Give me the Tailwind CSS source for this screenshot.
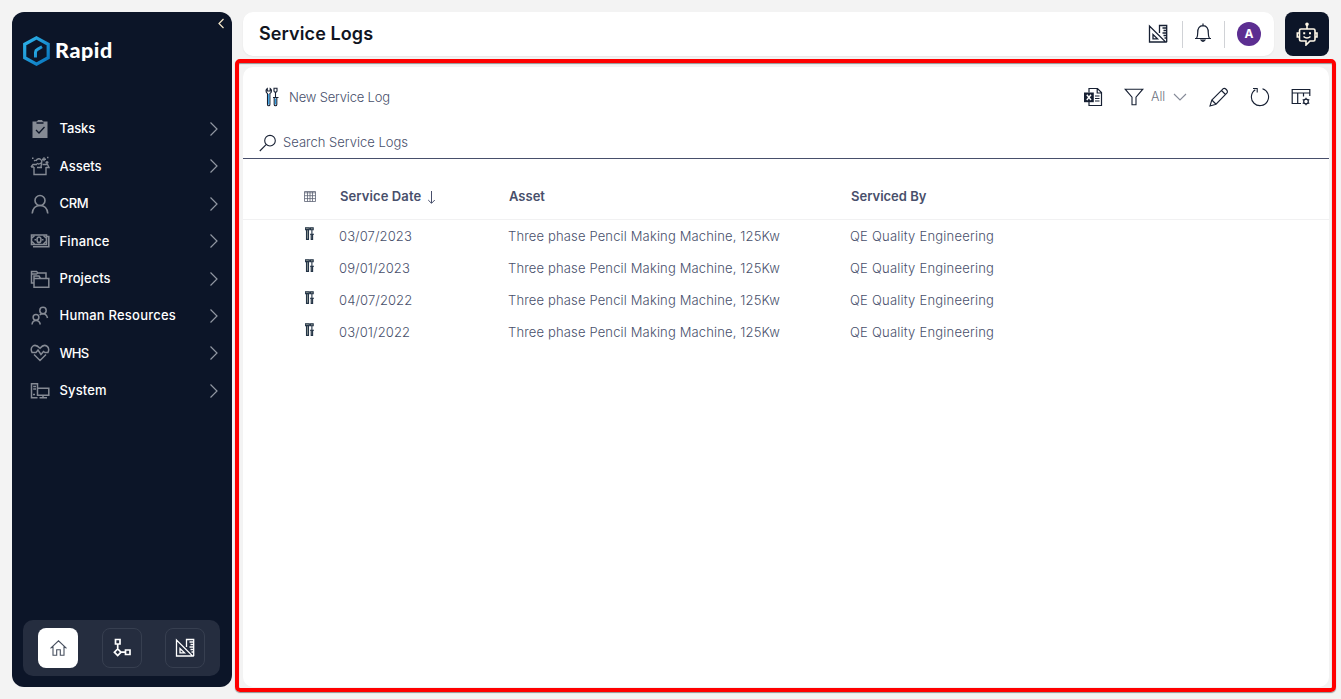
<!DOCTYPE html>
<html lang="en">
<head>
<meta charset="utf-8">
<title>Service Logs</title>
<script src="https://cdn.jsdelivr.net/npm/@tailwindcss/browser@4"></script>
</head>
<body class="relative flex h-[699px] w-[1341px] gap-[11px] overflow-hidden bg-[#f3f3f3] p-3 font-[Inter,sans-serif] text-[13px] text-[#484f6b]">
<svg class="absolute size-0">
  <defs>
    <linearGradient id="blue" x1="0" y1="0" x2="1" y2="1"><stop offset="0" stop-color="#2fb5ea"/><stop offset="1" stop-color="#0873bd"/></linearGradient>
    <symbol id="chev" viewBox="0 0 10 16"><path d="M1.5 1.5 8 8l-6.5 6.500" fill="none" stroke="currentColor" stroke-width="1.200"/></symbol>
    <symbol id="design" viewBox="0 0 20 20"><path d="M1.500 2v16h16.200zM5 10.500V14.800h4.500zM11.500 9V1.500h7.200V18M18.500 4h-4M18.500 6.500h-3M18.500 9h-4M18.500 11.500h-3M18.500 14h-2" fill="none" stroke="currentColor" stroke-width="1.300"/></symbol>
    <symbol id="tools" viewBox="0 0 14 20"><g fill="none" stroke="currentColor" stroke-width="1.100"><path d="M2.500 6.500v11q0 1.300 1.200 1.300t1.200-1.300v-11q1.600-.8 1.600-2.800 0-1.500-1.300-2.300V4H2.300V1.400Q1 2.200 1 3.700 1 5.700 2.500 6.500z"/><path d="M9 1.200h3v2.800l-.6 1H9.600L9 4zM10.500 5v5M8 10.500h5.500M9.200 10.500v7q0 1.300 1.300 1.300t1.300-1.300v-7"/></g><path d="M3.700 7v10.500M10.500 11.500v6" stroke="#2f9be0" stroke-width="1.200"/></symbol>
    <symbol id="tools-sm" viewBox="0 0 9 13"><path d="M.3.700h4v2h-4zM1.500 2.500V12.400h2V2.500zM5.500.7h2.700v2H5.500zM6.900 2.500v4.500M5 7.300h4M6.200 7.500v4.900h1.400V7.500" fill="#8a948f" stroke="currentColor" stroke-width="1.100"/></symbol>
  </defs>
</svg>

<aside class="flex h-[675px] w-[220px] shrink-0 flex-col rounded-xl bg-[#0c1528] text-white">
  <div class="flex h-[98px] justify-between pl-[10px] pr-[7px]">
    <div class="flex items-center gap-[2px] pb-[20px]">
      <svg class="h-[32px] w-[30px]" viewBox="0 0 30 32"><path d="M14.500 2.800 26.200 9.300v13.400L14.500 29.200 2.700 22.700V9.300z" fill="none" stroke="url(#blue)" stroke-width="3.200"/><path d="M13.500 22.500V17.500q0-2.200 2-3.200L20 11.800" fill="none" stroke="url(#blue)" stroke-width="3"/></svg>
      <span class="-mt-px ml-px font-[Lato,sans-serif] text-[21.500px] font-black tracking-[0.600px]">Rapid</span>
    </div>
    <svg class="mt-[6px] h-[11px] w-[8px] text-[#f4e7c9]" viewBox="0 0 8 11"><path d="M6.500 1 2 5.500 6.500 10" fill="none" stroke="currentColor" stroke-width="1.200"/></svg>
  </div>
  <nav class="flex flex-col pt-[0.400px] font-medium">
    <a class="flex h-[37.4px] items-center pl-[18px] pr-[13px]"><svg class="size-5 text-[#858a94]" viewBox="0 0 20 20"><path d="M3 2.500h4L8 1h4l1 1.500h4.500V19H2.500V2.500z" fill="currentColor"/><path d="M6.500 4h7M6 11l3 3 5.500-6" fill="none" stroke="#0c1528" stroke-width="1.300"/></svg><span class="ml-[9.500px] grow tracking-[-0.100px]">Tasks</span><svg class="h-4 w-[10px] text-[#9197a2]"><use href="#chev"/></svg></a>
    <a class="flex h-[37.4px] items-center pl-[18px] pr-[13px]"><svg class="size-5 text-[#858a94]" viewBox="0 0 20 20" fill="none" stroke="currentColor" stroke-width="1.400"><path d="M4 11v7.500h12V11M1 11l2-2.500h4M12.500 8.500h5l1.500 3h-3M1 11h3M7 11.500h5M6 5q1-3 4-2 3 2 1 4-3 2-4 0M12 4l-1 7M14 1.200v4M12 3.200h4M17 5v3M15.500 6.500h3M2 2.300h1.500M4 5l1.500-1M17 1.500h1.500"/></svg><span class="ml-[9.500px] grow">Assets</span><svg class="h-4 w-[10px] text-[#9197a2]"><use href="#chev"/></svg></a>
    <a class="flex h-[37.4px] items-center pl-[18px] pr-[13px]"><svg class="size-5 text-[#858a94]" viewBox="0 0 20 20" fill="none" stroke="currentColor" stroke-width="1.600"><circle cx="10" cy="6.500" r="5"/><path d="M2.200 19.500Q3 11.500 10 11.500t7.800 8"/></svg><span class="ml-[9.500px] grow tracking-[-0.300px]">CRM</span><svg class="h-4 w-[10px] text-[#9197a2]"><use href="#chev"/></svg></a>
    <a class="flex h-[37.4px] items-center pl-[18px] pr-[13px]"><svg class="size-5 text-[#858a94]" viewBox="0 0 20 20" fill="none" stroke="currentColor" stroke-width="1.600"><path d="M1.500 4h15v9.500h-15zM3 15.800h15.800V5.500H17"/><path d="M2 7l2.500-2.500M13.500 4.500L16 7M2 10.500l2.500 2.500M13.500 13L16 10.500"/><ellipse cx="9" cy="8.800" rx="2" ry="2.800"/><path d="M4.500 8.800H6M12 8.800h1.500"/></svg><span class="ml-[9.500px] grow tracking-[0.150px]">Finance</span><svg class="h-4 w-[10px] text-[#9197a2]"><use href="#chev"/></svg></a>
    <a class="flex h-[37.4px] items-center pl-[18px] pr-[13px]"><svg class="size-5 text-[#858a94]" viewBox="0 0 20 20" fill="none" stroke="currentColor" stroke-width="1.500"><path d="M4 18.300V9.500h14.800v8.800zM4 9.500V7h5l1.500 2.500M3.500 14H1.500V2.500h5L8 4h8v5M1.500 5h5L8 4"/></svg><span class="ml-[9.500px] grow tracking-[0.050px]">Projects</span><svg class="h-4 w-[10px] text-[#9197a2]"><use href="#chev"/></svg></a>
    <a class="flex h-[37.4px] items-center pl-[18px] pr-[13px]"><svg class="size-5 text-[#858a94]" viewBox="0 0 20 20" fill="none" stroke="currentColor" stroke-width="1.500"><circle cx="13" cy="4.500" r="3.200"/><circle cx="6" cy="11.300" r="2.900"/><path d="M2 18.500q.5-4 4-4t4.300 4M9.700 9q1-1.300 3.300-1.300 3.500 0 4.500 4.300"/></svg><span class="ml-[9.500px] grow tracking-[0.220px]">Human Resources</span><svg class="h-4 w-[10px] text-[#9197a2]"><use href="#chev"/></svg></a>
    <a class="flex h-[37.4px] items-center pl-[18px] pr-[13px]"><svg class="size-5 text-[#858a94]" viewBox="0 0 20 20" fill="none" stroke="currentColor" stroke-width="1.500"><path d="M2 9.500Q0 5 3 3t7 2.300Q13.500 1 16.700 3T18 9.500M4 11.500l6 6 6-6M1.500 9.500H6l2-2.500 3 4.500 2.500-3L15 9.500h3.500"/></svg><span class="ml-[9.500px] grow tracking-[-0.700px]">WHS</span><svg class="h-4 w-[10px] text-[#9197a2]"><use href="#chev"/></svg></a>
    <a class="flex h-[37.4px] items-center pl-[18px] pr-[13px]"><svg class="size-5 text-[#858a94]" viewBox="0 0 20 20" fill="none" stroke="currentColor" stroke-width="1.500"><path d="M7.500 7V2.700h-6v14h6M3.200 5.500H6M3.200 8H6M3 13.500h2M7.500 7.300h11.300v7H7.500zM13 14.500v2M9.500 16.700H17"/></svg><span class="ml-[9.500px] grow tracking-[0.150px]">System</span><svg class="h-4 w-[10px] text-[#9197a2]"><use href="#chev"/></svg></a>
  </nav>
  <div class="ml-[11px] mr-3 mb-[11px] mt-auto flex h-14 items-center rounded-[10px] bg-[#252d3f] pl-[15px]">
    <div class="flex size-10 shrink-0 items-center justify-center rounded-lg bg-white text-[#48505f]"><svg class="size-[18px]" viewBox="0 0 18 18" fill="none" stroke="currentColor" stroke-width="1.100"><path d="M1.500 9.300 9.500 1.800l8 7.500M4 7.500v8.700h3.700v-5.500h3.600v5.500H15V7.500"/></svg></div>
    <div class="ml-6 flex size-10 shrink-0 items-center justify-center rounded-lg border border-[#373f50]"><svg class="size-5" viewBox="0 0 20 20" fill="none" stroke="currentColor" stroke-width="1.700"><path d="M3.500 1.500H8V6H3.500zM5.700 6v5M9 14.200h4.500M13.500 12H18v4.500h-4.500zM5.700 10.900 9 14.200l-3.300 3.300-3.300-3.300z"/></svg></div>
    <div class="ml-[23px] flex size-10 shrink-0 items-center justify-center rounded-lg border border-[#373f50]"><svg class="size-5"><use href="#design"/></svg></div>
  </div>
</aside>

<div class="flex w-[1086px] flex-col gap-[11px]">
  <div class="flex h-11 gap-[11px]">
    <header class="flex w-[1031px] items-center rounded-[10px] bg-white pl-4 pr-[13px] shadow-xs">
      <h1 class="-mt-px grow text-[18px] font-semibold tracking-[0.100px] text-[#11151f]">Service Logs</h1>
      <svg class="size-5 text-[#172033]"><use href="#design"/></svg>
      <div class="ml-[14px] h-[27px] w-px bg-[#d0d2d6]"></div>
      <svg class="ml-[10px] mr-px mt-[-3px] size-5 text-[#172033]" viewBox="0 0 20 20" fill="none" stroke="currentColor" stroke-width="1.200"><path d="M10 .5v2M2 15.500h16M3.500 15.500q1.200-2 1.200-5.500Q4.500 3 10 2.700q5.500.3 5.300 7.300 0 3.500 1.200 5.500M8 17q2 2.800 4 0z"/></svg>
      <div class="ml-[10px] h-[27px] w-px bg-[#d0d2d6]"></div>
      <div class="ml-3 flex size-6 items-center justify-center rounded-full bg-[#5c2e91] text-[12px] font-bold text-white">A</div>
    </header>
    <div class="flex size-11 items-center justify-center rounded-lg bg-[#0c1528] text-[#fff8e8]"><svg class="-mt-px size-6" viewBox="0 0 24 24" fill="none" stroke="currentColor" stroke-width="1.600"><path d="M12 3v4M6 7h12.500q1.500 0 1.500 1.500v9q0 1.500-1.500 1.500H15l-4 4v-4H6q-1.500 0-1.500-1.500v-9Q4.500 7 6 7zM4.500 11H2.300v4h2.200M20 11h2v4h-2M8.500 14.500q3.500 3 7 0"/><circle cx="12" cy="2.300" r="1" fill="currentColor"/><path d="M8.200 11.200h2M14 11.200h2" stroke-width="2"/></svg></div>
  </div>

  <main class="flex h-[620px] flex-col rounded-[10px] bg-white">
    <div class="flex h-[60px] items-center pl-[22px] pr-[18px] text-[#172033]">
      <svg class="h-5 w-[14px]"><use href="#tools"/></svg>
      <span class="ml-[10px] grow pt-px font-light tracking-[-0.180px] text-[#484f6b]">New Service Log</span>
      <svg class="size-5" viewBox="0 0 20 20" fill="none" stroke="currentColor" stroke-width="1.200"><path d="M6 5.500v-4h8.500l4 4v13H6V15M14.200 1.500V6h4.300M12 9h4.500M12 11.500h4.500M12 14h4.500"/><path d="M1 5.500h9.800v9.700H1z" fill="currentColor" stroke="none"/><path d="M3.800 7.800 8 13M8 7.800 3.800 13" stroke="#fff" stroke-width="1.400"/></svg>
      <svg class="ml-[21px] size-5" viewBox="0 0 20 20" fill="none" stroke="currentColor" stroke-width="1.100"><path d="M1.200 2.200h17.600L12 10.200v7.500H8v-7.500z"/></svg>
      <span class="ml-[7px] w-4 text-[12.500px] font-light text-[#6c7280]">All</span>
      <svg class="ml-[6px] h-2 w-[14px] text-[#858a98]" viewBox="0 0 14 8"><path d="M1 1l6 6 6-6" fill="none" stroke="currentColor" stroke-width="1.100"/></svg>
      <svg class="ml-[22px] size-5" viewBox="0 0 20 20" fill="none" stroke="currentColor" stroke-width="1.100"><path d="M1 19l1.800-6L14 1.800q1.500-1.200 3.300.7t.7 3.500L7 17.200zM12.500 3.500l4 4M2.800 13l4 4"/></svg>
      <svg class="ml-[21px] size-5" viewBox="0 0 20 20" fill="none" stroke="currentColor" stroke-width="1.100"><path d="M12.500 1.800A8.600 8.600 0 1 1 5.300 2.800M3 1.500h4.200v4"/></svg>
      <svg class="ml-[21px] size-5" viewBox="0 0 20 20" fill="none" stroke="currentColor" stroke-width="1.200"><path d="M10 16.500H1.200v-14h17.600V9M1.200 6h17.600M6.700 6v10.500M12.500 6v3.500"/><circle cx="15" cy="14.500" r="2.300"/><path d="M15 10.800v1.400M15 16.800v1.400M11.700 12.500l1.300.8M17 15.700l1.300.8M11.700 16.500l1.300-.8M17 13.300l1.300-.8"/></svg>
    </div>
    <div class="flex h-8 items-center border-b border-[#484f6b] pl-4">
      <svg class="size-[18px] text-[#172033]" viewBox="0 0 18 18" fill="none" stroke="currentColor" stroke-width="1.100"><circle cx="11" cy="6.700" r="5.300"/><path d="M7.100 10.600.8 17"/></svg>
      <span class="ml-[6px] font-light">Search Service Logs</span>
    </div>
    <div class="mt-[15px] grid h-[46px] grid-cols-[97px_169px_342px_1fr] items-center border-b border-[#f1f1f2] font-semibold">
      <svg class="ml-[61px] size-3 text-[#5d6375]" viewBox="0 0 12 12" fill="none" stroke="currentColor" stroke-width=".8"><path d="M.5.500h11v10H.5zM.5 1.800h11M.5 4.700h11M.5 7.600h11M3.500 1v9.500M6 1v9.500M8.500 1v9.500"/></svg>
      <div class="flex items-center"><span class="tracking-[0.100px]">Service Date</span><svg class="ml-[6px] mt-[2px] h-[13px] w-[9px]" viewBox="0 0 9 13"><path d="M4.500 0v12M1.200 9l3.300 3.300L7.800 9" fill="none" stroke="currentColor" stroke-width="1"/></svg></div>
      <span>Asset</span><span>Serviced By</span>
    </div>
    <div class="grid auto-rows-[32px] grid-cols-[96px_169px_342px_1fr] items-center pt-px font-light">
      <svg class="mb-[8px] ml-[62px] h-[13px] w-[9px] text-[#243447]"><use href="#tools-sm"/></svg><span class="tracking-[0.100px]">03/07/2023</span><span class="tracking-[0.150px]">Three phase Pencil Making Machine, 125Kw</span><span class="tracking-[0.220px]">QE Quality Engineering</span>
      <svg class="mb-[8px] ml-[62px] h-[13px] w-[9px] text-[#243447]"><use href="#tools-sm"/></svg><span class="tracking-[0.100px]">09/01/2023</span><span class="tracking-[0.150px]">Three phase Pencil Making Machine, 125Kw</span><span class="tracking-[0.220px]">QE Quality Engineering</span>
      <svg class="mb-[8px] ml-[62px] h-[13px] w-[9px] text-[#243447]"><use href="#tools-sm"/></svg><span class="tracking-[0.100px]">04/07/2022</span><span class="tracking-[0.150px]">Three phase Pencil Making Machine, 125Kw</span><span class="tracking-[0.220px]">QE Quality Engineering</span>
      <svg class="mb-[8px] ml-[62px] h-[13px] w-[9px] text-[#243447]"><use href="#tools-sm"/></svg><span class="tracking-[0.100px]">03/01/2022</span><span class="tracking-[0.150px]">Three phase Pencil Making Machine, 125Kw</span><span class="tracking-[0.220px]">QE Quality Engineering</span>
    </div>
  </main>
</div>
<div class="pointer-events-none absolute left-[235px] top-[59px] h-[633px] w-[1101px] rounded-[5px] border-4 border-[#ff0000] shadow-[0_1px_1px_#0006,inset_0_1px_1px_#0006]"></div>
</body>
</html>
